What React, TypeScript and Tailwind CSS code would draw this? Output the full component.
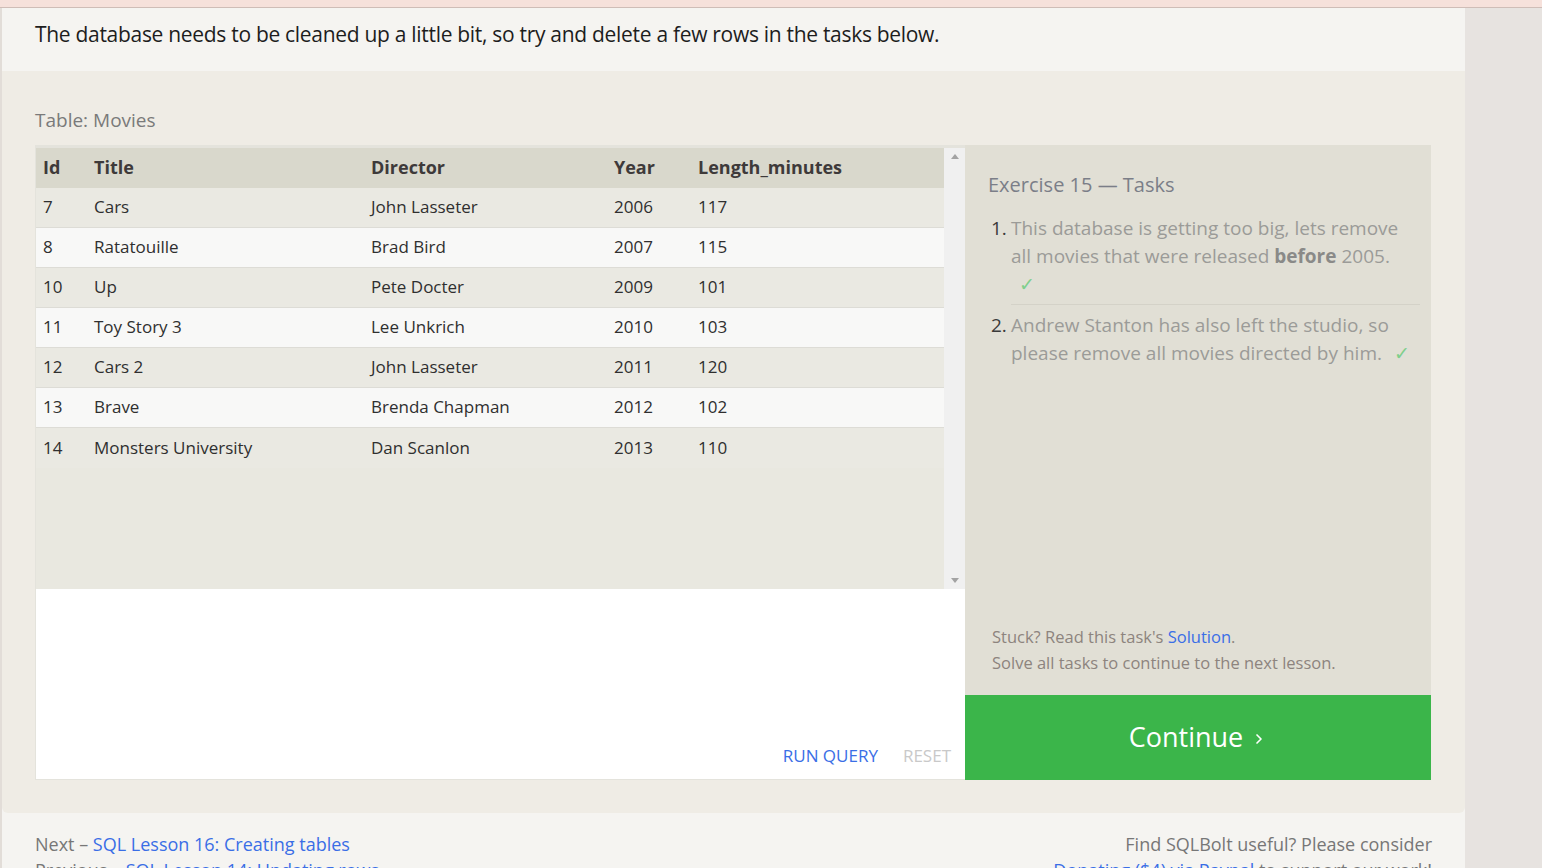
import { ChevronRight } from 'lucide-react';

const movies = [
  { id: 7, title: 'Cars', director: 'John Lasseter', year: 2006, length: 117 },
  { id: 8, title: 'Ratatouille', director: 'Brad Bird', year: 2007, length: 115 },
  { id: 10, title: 'Up', director: 'Pete Docter', year: 2009, length: 101 },
  { id: 11, title: 'Toy Story 3', director: 'Lee Unkrich', year: 2010, length: 103 },
  { id: 12, title: 'Cars 2', director: 'John Lasseter', year: 2011, length: 120 },
  { id: 13, title: 'Brave', director: 'Brenda Chapman', year: 2012, length: 102 },
  { id: 14, title: 'Monsters University', director: 'Dan Scanlon', year: 2013, length: 110 },
];

const font = { fontFamily: '"Open Sans", "Noto Sans", sans-serif' };

export default function App() {
  return (
    <div className="w-[1542px] h-[868px] overflow-hidden bg-[#e7e3e0]" style={font}>
      <div className="h-[8px] bg-[#f6e1db] border-b border-[#cfbdb7]" />
      <div className="w-[1465px] border-l-2 border-[#e2ddd8] bg-[#f5f4f1]">
        <div className="h-[63px] flex items-center pb-[10px] pl-[33px] text-[21px] tracking-[-0.3px] text-[#1d1d1d]">
          The database needs to be cleaned up a little bit, so try and delete a few rows in the tasks below.
        </div>

        <div className="bg-[#efece5] rounded-b-md px-[33px] pt-[35px] pb-[33px]">
          <div className="text-[19px] text-[#7a7a7a] mb-[10px]">Table: Movies</div>
          <div className="flex">
            <div className="w-[930px]">
              <div className="flex h-[444px] border-t-[3px] border-l border-[#e4e3dc] bg-[#e9e8e0]">
                <div className="flex-1">
                  <div className="flex h-[40px] items-center bg-[#d9d8cc] text-[18px] font-bold text-[#3e3a3a]">
                    <div className="w-[51px] pl-[7px]">Id</div>
                    <div className="w-[277px] pl-[7px]">Title</div>
                    <div className="w-[243px] pl-[7px]">Director</div>
                    <div className="w-[84px] pl-[7px]">Year</div>
                    <div className="flex-1 pl-[7px]">Length_minutes</div>
                  </div>
                  {movies.map((m, i) => (
                    <div
                      key={m.id}
                      className={`flex h-[40px] items-center text-[17px] text-[#2f2f2f] ${
                        i % 2 === 0 ? 'bg-[#eae9e2]' : 'bg-[#f8f8f7]'
                      } ${i < movies.length - 1 ? 'border-b border-[#dddcd6]' : ''}`}
                    >
                      <div className="w-[51px] pl-[7px]">{m.id}</div>
                      <div className="w-[277px] pl-[7px]">{m.title}</div>
                      <div className="w-[243px] pl-[7px]">{m.director}</div>
                      <div className="w-[84px] pl-[7px]">{m.year}</div>
                      <div className="flex-1 pl-[7px]">{m.length}</div>
                    </div>
                  ))}
                </div>
                <div className="w-[21px] bg-[#f0f0f0] flex flex-col items-center justify-between py-[6px]">
                  <div className="w-0 h-0 border-l-[4px] border-r-[4px] border-b-[5px] border-l-transparent border-r-transparent border-b-[#a3a3a3]" />
                  <div className="w-0 h-0 border-l-[4px] border-r-[4px] border-t-[5px] border-l-transparent border-r-transparent border-t-[#a3a3a3]" />
                </div>
              </div>
              <div className="h-[191px] bg-white border-l border-b border-[#e4e3dc] flex items-end justify-end pb-[10px] pr-[14px] gap-[25px] text-[17px]">
                <span className="text-[#3a6ee6]">RUN QUERY</span>
                <span className="text-[#c9c9c9]">RESET</span>
              </div>
            </div>

            <div className="w-[466px] flex flex-col">
              <div className="flex-1 bg-[#e1dfd5] pl-[23px] pr-[11px] pt-[25px] flex flex-col">
                <div className="text-[20px] text-[#7b7e88]">Exercise 15 — Tasks</div>
                <ol className="mt-[14px] text-[19px] leading-[28px] text-[#9b9b98]">
                  <li className="flex">
                    <span className="w-[23px] pl-[3px] text-[#3a3a3a]">1.</span>
                    <span className="flex-1 border-b border-[#d4d2c8] pb-[6px]">
                      This database is getting too big, lets remove all movies that were released{' '}
                      <b className="text-[#8a8a88]">before</b> 2005.
                      <br />
                      <span className="ml-[8px] text-[#7fcf8c]">✓</span>
                    </span>
                  </li>
                  <li className="flex pt-[6px]">
                    <span className="w-[23px] pl-[3px] text-[#3a3a3a]">2.</span>
                    <span className="flex-1">
                      Andrew Stanton has also left the studio, so please remove all movies directed by him.
                      <span className="ml-[12px] text-[#7fcf8c]">✓</span>
                    </span>
                  </li>
                </ol>
                <div className="mt-auto pl-[4px] pb-[19px] text-[16.5px] leading-[26px] text-[#8d847e]">
                  <div>
                    Stuck? Read this task's <span className="text-[#3a6ee6]">Solution</span>.
                  </div>
                  <div>Solve all tasks to continue to the next lesson.</div>
                </div>
              </div>
              <div className="h-[85px] bg-[#3bb54a] flex items-center justify-center text-white text-[27px]">
                Continue
                <ChevronRight className="w-[16px] h-[16px] ml-[8px] mt-[3px]" strokeWidth={2.5} />
              </div>
            </div>
          </div>
        </div>

        <div className="pl-[33px] pr-[33px] pt-[18px] flex justify-between text-[18px] leading-[26px]">
          <div className="text-[#777]">
            <div>
              Next – <span className="text-[#3a6ee6]">SQL Lesson 16: Creating tables</span>
            </div>
            <div>
              Previous – <span className="text-[#3a6ee6]">SQL Lesson 14: Updating rows</span>
            </div>
          </div>
          <div className="text-right text-[#777]">
            <div>Find SQLBolt useful? Please consider</div>
            <div>
              <span className="text-[#3a6ee6]">Donating ($4) via Paypal</span> to support our work!
            </div>
          </div>
        </div>
      </div>
    </div>
  );
}
